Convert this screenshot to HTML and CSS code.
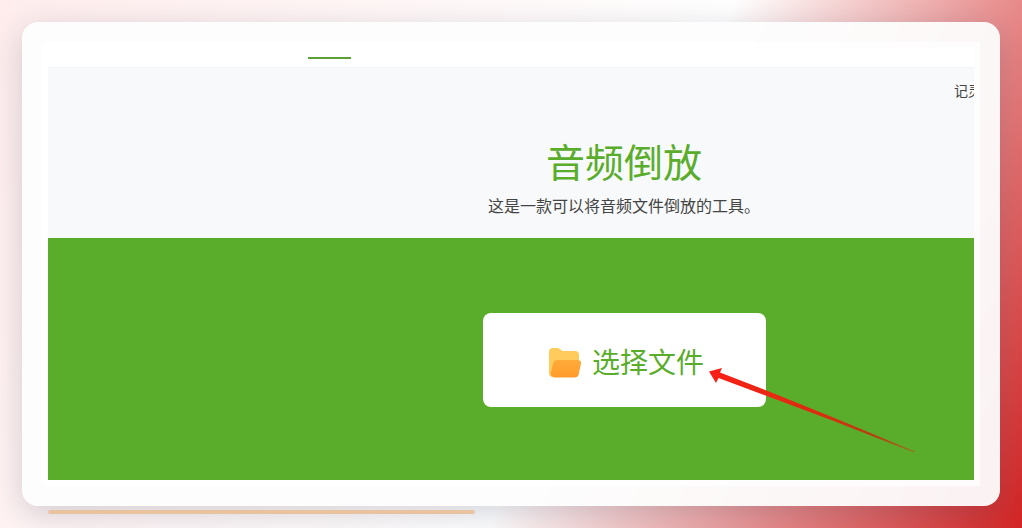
FILE: index.html
```
<!DOCTYPE html>
<html lang="zh-CN">
<head>
  <meta charset="UTF-8">
  <title>音频倒放</title>
  <meta name="viewport" content="width=device-width, initial-scale=1.0">
  <link rel="stylesheet" href="styles.css">
</head>
<body>
  <main class="card">
    <div class="frame">
      <div class="screen">
        <div class="page">
          <nav class="navbar">
            <div class="nav-active"></div>
          </nav>
          <header class="hero">
            <div class="hero-links">记灵</div>
            <h1 class="hero-title">音频倒放</h1>
            <p class="hero-desc">这是一款可以将音频文件倒放的工具。</p>
          </header>
          <section class="upload">
            <button class="upload-btn" type="button">
              <svg class="folder" viewBox="0 0 34 30" aria-hidden="true">
                <defs>
                  <linearGradient id="folderFront" x1="0" y1="0" x2="0" y2="1">
                    <stop offset="0" stop-color="#ffab3a"/>
                    <stop offset="1" stop-color="#ff9b2b"/>
                  </linearGradient>
                </defs>
                <path d="M1 4a4 4 0 0 1 4-4h4c1.200 0 2.200.5 3 1.300L14.500 3H27a4 4 0 0 1 4 4v18a4 4 0 0 1-4 4H5a4 4 0 0 1-4-4z" fill="#ffcb5c"/>
                <path d="M9.500 12H30a3 3 0 0 1 3 3.700l-2.300 10a4.500 4.500 0 0 1-4.400 3.800H6.500a3.700 3.700 0 0 1-3.600-4.600L5.100 15.500a4.500 4.500 0 0 1 4.400-3.500z" fill="url(#folderFront)"/>
              </svg>
              <span>选择文件</span>
            </button>
          </section>
        </div>
        <!-- pointer to the upload button -->
        <svg class="arrow" viewBox="0 0 208 86" aria-hidden="true">
          <defs>
            <linearGradient id="arrowFill" x1="0" y1="0" x2="1" y2="0">
              <stop offset="0" stop-color="#fa1f16"/>
              <stop offset=".5" stop-color="#dc2c10"/>
              <stop offset=".8" stop-color="#b5400f"/>
              <stop offset="1" stop-color="#8f7a20"/>
            </linearGradient>
          </defs>
          <path d="M0 3.500 13 0 11 4.500 60 23.500 128 51 206 83.500 205 84.500 126 53.500 58 28 9.500 10 7 15z" fill="url(#arrowFill)"/>
        </svg>
      </div>
    </div>
  </main>
  <div class="bar"></div>
</body>
</html>
```
FILE: styles.css
```
* {
  box-sizing: border-box;
}
body {
  margin: 0;
  min-height: 100vh;
  padding: 22px 22px 14px;
  background: linear-gradient(115deg, #ffeded 0%, #fff 58%, #d32424 100%);
  font-family: "Noto Sans CJK SC", sans-serif;
  color: #444;
}
.card {
  padding: 20px;
  border-radius: 16px;
  background: rgba(253, 253, 253, 0.95);
  box-shadow: 0 8px 32px rgba(31, 38, 70, 0.2);
}
.frame {
  padding: 6px;
  background: rgba(255, 255, 255, 0.7);
}
.screen {
  position: relative;
  overflow: hidden;
}
/* the page is wider than the visible area and is cut on the right */
.page {
  width: calc(100% + 226px);
}
.navbar {
  height: 20px;
  padding: 9px 0 0 260px;
  background: #fff;
  border-bottom: 1px solid #f1f3f4;
}
.nav-active {
  width: 43px;
  height: 2px;
  background: #5c9f38;
}
.hero {
  padding: 12px 0 24px;
  background: #f7f9fb;
  text-align: center;
}
.hero-links {
  padding-right: 218px;
  font-size: 14px;
  line-height: 20px;
  text-align: right;
}
.hero-title {
  margin: 24px 0 0;
  font-size: 39px;
  font-weight: 400;
  line-height: 72px;
  color: #5aad2b;
}
.hero-desc {
  margin: 0;
  font-size: 16px;
  font-weight: 400;
  line-height: 18px;
}
.upload {
  display: flex;
  justify-content: center;
  padding: 75px 0 73px;
  background: #5aad2b;
}
.upload-btn {
  display: flex;
  align-items: center;
  justify-content: center;
  gap: 10px;
  width: 283px;
  height: 94px;
  padding: 2px 0 0 4px;
  border: none;
  border-radius: 8px;
  background: #fff;
  color: #5aad2b;
  font-family: inherit;
  font-size: 28px;
  font-weight: 400;
  line-height: 40px;
  cursor: pointer;
}
.folder {
  width: 34px;
  height: 30px;
  margin-top: 4px;
}
.arrow {
  position: absolute;
  left: 661px;
  top: 320px;
  width: 208px;
  height: 86px;
  pointer-events: none;
}
.bar {
  width: 427px;
  height: 4px;
  margin: 4px 0 0 26px;
  border-radius: 2px;
  background: #e9c29f;
}
```
